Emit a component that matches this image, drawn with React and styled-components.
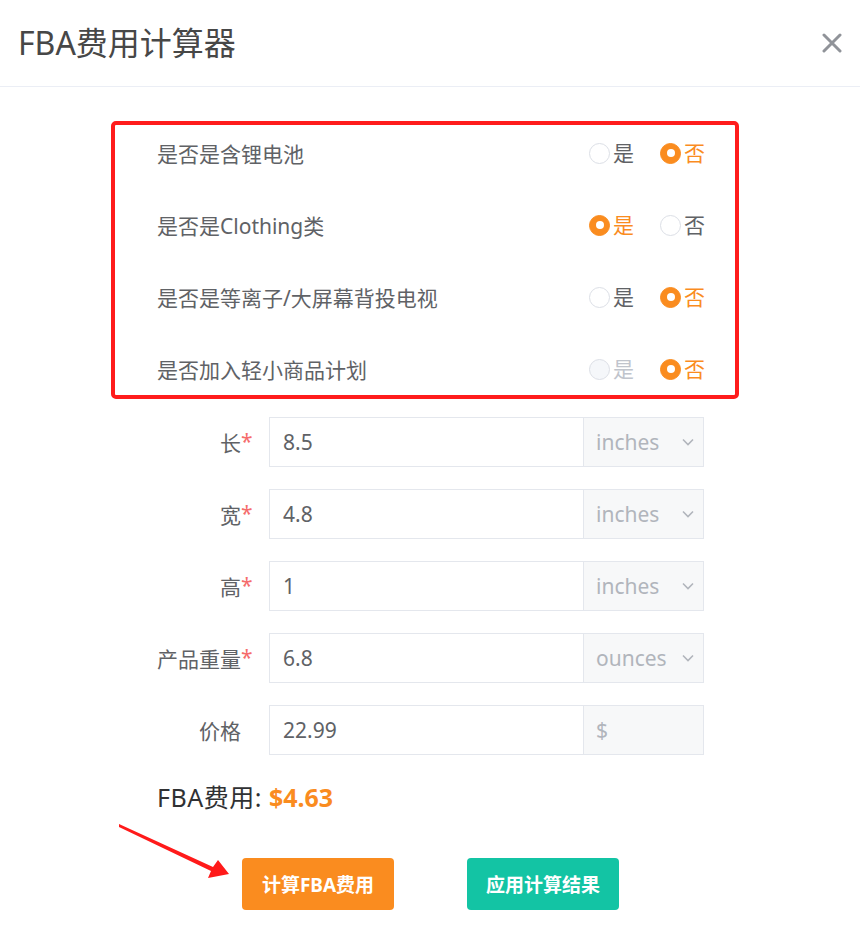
import React from 'react'
import styled, { createGlobalStyle } from 'styled-components'

const GlobalStyle = createGlobalStyle`
  body {
    margin: 0;
    background: #ffffff;
    font-family: "Noto Sans", "Noto Sans CJK SC", sans-serif;
  }
`

const options = [
  { label: '是否是含锂电池', value: 'no' },
  { label: '是否是Clothing类', value: 'yes' },
  { label: '是否是等离子/大屏幕背投电视', value: 'no' },
  { label: '是否加入轻小商品计划', value: 'no', disabledYes: true },
]

const fields = [
  { label: '长', required: true, value: '8.5', unit: 'inches', select: true },
  { label: '宽', required: true, value: '4.8', unit: 'inches', select: true },
  { label: '高', required: true, value: '1', unit: 'inches', select: true },
  { label: '产品重量', required: true, value: '6.8', unit: 'ounces', select: true },
  { label: '价格', required: false, value: '22.99', unit: '$', select: false },
]

const Radio = ({ checked, disabled, children }) => (
  <StRadio>
    <StCircle $checked={checked} $disabled={disabled} />
    <StRadioLabel $checked={checked} $disabled={disabled}>{children}</StRadioLabel>
  </StRadio>
)

const App = () => {
  return (
    <>
      <GlobalStyle />
      <StPage>
        <StHeader>
          <StTitle>FBA费用计算器</StTitle>
          <svg width="20" height="20" viewBox="0 0 20 20">
            <path d="M2 2 L18 18 M18 2 L2 18" stroke="#909399" strokeWidth="3" strokeLinecap="round" />
          </svg>
        </StHeader>
        <StBody>
          <StRedBox>
            {options.map((item) => (
              <StOptionRow key={item.label}>
                <StOptionLabel>{item.label}</StOptionLabel>
                <StRadioGroup>
                  <Radio checked={item.value === 'yes'} disabled={item.disabledYes}>是</Radio>
                  <Radio checked={item.value === 'no'}>否</Radio>
                </StRadioGroup>
              </StOptionRow>
            ))}
          </StRedBox>
          <StForm>
            {fields.map((f) => (
              <StFieldRow key={f.label}>
                <StLabel>
                  {f.label}
                  <StStar>{f.required ? '*' : ''}</StStar>
                </StLabel>
                <StInputGroup>
                  <StValue>{f.value}</StValue>
                  <StAddon>
                    <span>{f.unit}</span>
                    {f.select && (
                      <svg width="12" height="8" viewBox="0 0 12 8">
                        <path d="M1 1.5 L6 6.5 L11 1.5" stroke="#b1b5bc" strokeWidth="1.6" fill="none" />
                      </svg>
                    )}
                  </StAddon>
                </StInputGroup>
              </StFieldRow>
            ))}
          </StForm>
          <StResult>
            FBA费用: <StPrice>$4.63</StPrice>
          </StResult>
          <StButtonRow>
            <StButton $bg="#fa8c1f">计算FBA费用</StButton>
            <StButton $bg="#13c4a4">应用计算结果</StButton>
          </StButtonRow>
        </StBody>
        <StArrow width="130" height="70" viewBox="0 0 130 70">
          <polygon points="9,9 103,52 108,45 119,59 98,63 101,56 9,12" fill="#ff1a1a" />
        </StArrow>
      </StPage>
    </>
  )
}

export default App

const StPage = styled.div`
  position: relative;
  width: 860px;
  min-height: 935px;
  background: #ffffff;
`
const StHeader = styled.div`
  display: flex;
  align-items: center;
  justify-content: space-between;
  height: 87px;
  padding: 0 18px;
  box-sizing: border-box;
  border-bottom: 1px solid #ebeef5;
`
const StTitle = styled.div`
  font-size: 32px;
  line-height: 40px;
  color: #474747;
  margin-top: -1px;
`
const StBody = styled.div`
  padding-left: 111px;
  width: 628px;
`
const StRedBox = styled.div`
  margin-top: 34px;
  height: 278px;
  box-sizing: border-box;
  border: 4px solid #ff1c1c;
  border-radius: 5px;
  padding: 4px 30px 0 42px;
  display: flex;
  flex-direction: column;
  gap: 24px;
`
const StOptionRow = styled.div`
  display: flex;
  align-items: center;
  justify-content: space-between;
  height: 48px;
`
const StOptionLabel = styled.div`
  font-size: 21px;
  color: #606266;
`
const StRadioGroup = styled.div`
  display: flex;
  gap: 26px;
`
const StRadio = styled.div`
  display: flex;
  align-items: center;
  gap: 3px;
`
const StCircle = styled.span`
  position: relative;
  width: 21px;
  height: 21px;
  box-sizing: border-box;
  border-radius: 50%;
  border: 1px solid ${(p) => (p.$checked ? '#fa8c1f' : '#dcdfe6')};
  background: ${(p) => (p.$checked ? '#fa8c1f' : p.$disabled ? '#f5f7fa' : '#ffffff')};
  &::after {
    content: '';
    display: ${(p) => (p.$checked ? 'block' : 'none')};
    position: absolute;
    left: 50%;
    top: 50%;
    width: 8px;
    height: 8px;
    margin: -4px 0 0 -4px;
    border-radius: 50%;
    background: #ffffff;
  }
`
const StRadioLabel = styled.span`
  font-size: 21px;
  line-height: 28px;
  color: ${(p) => (p.$checked ? '#fa8c1f' : p.$disabled ? '#c0c4cc' : '#606266')};
`
const StForm = styled.div`
  margin-top: 18px;
  display: flex;
  flex-direction: column;
  gap: 22px;
`
const StFieldRow = styled.div`
  display: flex;
  align-items: center;
  height: 50px;
`
const StLabel = styled.div`
  width: 141px;
  margin-right: 17px;
  display: flex;
  justify-content: flex-end;
  font-size: 21px;
  color: #606266;
`
const StStar = styled.span`
  width: 11px;
  color: #f56c6c;
  font-size: 21px;
`
const StInputGroup = styled.div`
  display: flex;
  width: 435px;
  height: 50px;
  box-sizing: border-box;
  border: 1px solid #e4e7ed;
`
const StValue = styled.div`
  flex: 1;
  padding-left: 13px;
  font-size: 21px;
  line-height: 48px;
  color: #606266;
`
const StAddon = styled.div`
  display: flex;
  align-items: center;
  justify-content: space-between;
  width: 120px;
  box-sizing: border-box;
  padding: 0 9px 0 12px;
  border-left: 1px solid #e4e7ed;
  background: #f7f8f9;
  color: #b1b5bc;
  font-size: 21px;
`
const StResult = styled.div`
  margin-top: 27px;
  padding-left: 46px;
  font-size: 25px;
  line-height: 30px;
  color: #303133;
  letter-spacing: 0.5px;
`
const StPrice = styled.span`
  color: #fa8c1f;
  font-weight: 700;
  letter-spacing: 0;
`
const StButtonRow = styled.div`
  display: flex;
  gap: 73px;
  margin-top: 46px;
  padding-left: 131px;
`
const StButton = styled.button`
  width: 152px;
  height: 52px;
  border: none;
  border-radius: 4px;
  background: ${(p) => p.$bg};
  color: #ffffff;
  font-family: "Noto Sans", "Noto Sans CJK SC", sans-serif;
  font-size: 19px;
  font-weight: 700;
`
const StArrow = styled.svg`
  position: absolute;
  left: 110px;
  top: 815px;
`
